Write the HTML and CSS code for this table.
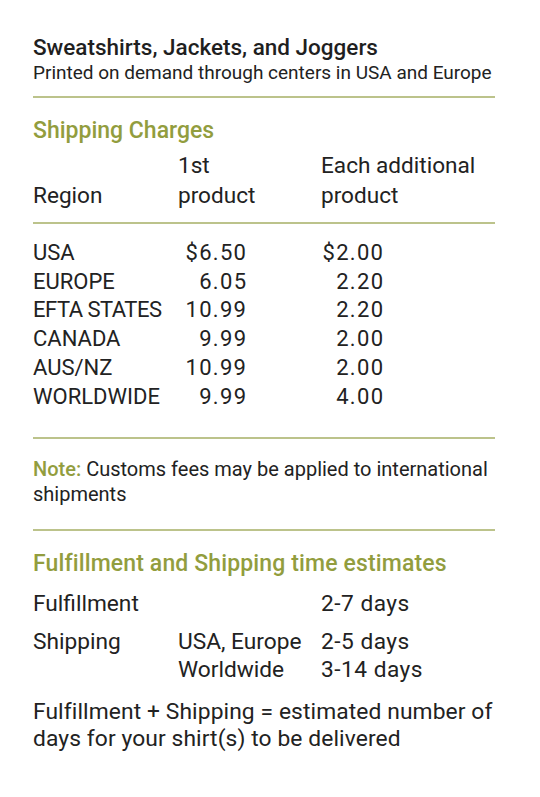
FILE: index.html
```html
<!DOCTYPE html>
<html>
<head>
<meta charset="utf-8">
<link rel="stylesheet" href="styles.css">
</head>
<body>
<div class="sheet">
  <h1 class="title">Sweatshirts, Jackets, and Joggers</h1>
  <p class="subtitle">Printed on demand through centers in USA and Europe</p>
  <hr class="rule rule-top">

  <h2 class="heading heading-charges">Shipping Charges</h2>
  <div class="charges-head">
    <div class="ch-region">Region</div>
    <div>1st<br>product</div>
    <div>Each additional<br>product</div>
  </div>
  <hr class="rule rule-head">

  <div class="charges">
    <div class="row"><span>USA</span><span class="num">$6.50</span><span></span><span class="num">$2.00</span></div>
    <div class="row"><span>EUROPE</span><span class="num">6.05</span><span></span><span class="num">2.20</span></div>
    <div class="row"><span class="tight">EFTA STATES</span><span class="num">10.99</span><span></span><span class="num">2.20</span></div>
    <div class="row"><span>CANADA</span><span class="num">9.99</span><span></span><span class="num">2.00</span></div>
    <div class="row"><span>AUS/NZ</span><span class="num">10.99</span><span></span><span class="num">2.00</span></div>
    <div class="row"><span>WORLDWIDE</span><span class="num">9.99</span><span></span><span class="num">4.00</span></div>
  </div>
  <hr class="rule rule-table">

  <div class="note"><span class="note-label">Note:</span> <span>Customs fees may be applied to international shipments</span></div>
  <hr class="rule rule-note">

  <h2 class="heading heading-times">Fulfillment and Shipping time estimates</h2>
  <div class="times times-fulfil">
    <span>Fulfillment</span><span></span><span class="days">2-7 days</span>
  </div>
  <div class="times times-ship">
    <span>Shipping</span><span>USA, Europe</span><span class="days">2-5 days</span>
    <span></span><span>Worldwide</span><span class="days">3-14 days</span>
  </div>
  <p class="summary">Fulfillment + Shipping = estimated number of days for your shirt(s) to be delivered</p>
</div>
</body>
</html>
```
FILE: styles.css
```css
html, body {
  margin: 0;
  padding: 0;
  background: #ffffff;
}

body {
  font-family: Roboto, "Liberation Sans", Arial, sans-serif;
  color: #222222;
}

.sheet {
  width: 462px;
  margin-left: 33px;
  padding-top: 34px;
}

.title {
  margin: 0;
  font-size: 22.5px;
  font-weight: 500;
  line-height: 26px;
  color: #1f1f1f;
}

.subtitle {
  margin: 0;
  font-size: 19px;
  line-height: 26px;
}

.rule {
  border: 0;
  height: 2px;
  background: #bcc38b;
  margin: 0;
}

.rule-top { margin-top: 10px; }

.heading {
  margin: 0;
  font-size: 23px;
  font-weight: 500;
  line-height: 26px;
  color: #929d3e;
}

.heading-charges { margin-top: 20px; }

.charges-head {
  display: grid;
  grid-template-columns: 145px 143px 1fr;
  margin-top: 7px;
  font-size: 22.6px;
  line-height: 30px;
}

.ch-region { align-self: end; }

.rule-head { margin-top: 11px; }

.charges {
  margin-top: 15px;
  font-size: 22px;
  line-height: 28.7px;
}

.row {
  display: grid;
  grid-template-columns: 145px 68px 75px 62px;
}

.tight { letter-spacing: -0.5px; }

.num {
  text-align: right;
  font-size: 22px;
  letter-spacing: 1.3px;
  margin-right: -1.3px;
}

.rule-table { margin-top: 26px; }

.note {
  margin: 18px 0 0;
  font-size: 20px;
  line-height: 25px;
}

.note-label {
  color: #929d3e;
  font-weight: 500;
}

.rule-note { margin-top: 22px; }

.heading-times {
  margin-top: 20px;
  letter-spacing: 0.13px;
}

.times {
  display: grid;
  grid-template-columns: 145px 143px 1fr;
  font-size: 22.7px;
  line-height: 28px;
}

.days { letter-spacing: 0.5px; }

.times-fulfil { margin-top: 13px; }
.times-ship { margin-top: 10px; }

.summary {
  margin: 14px 0 0;
  font-size: 22.8px;
  line-height: 27px;
  letter-spacing: 0.1px;
}
```
